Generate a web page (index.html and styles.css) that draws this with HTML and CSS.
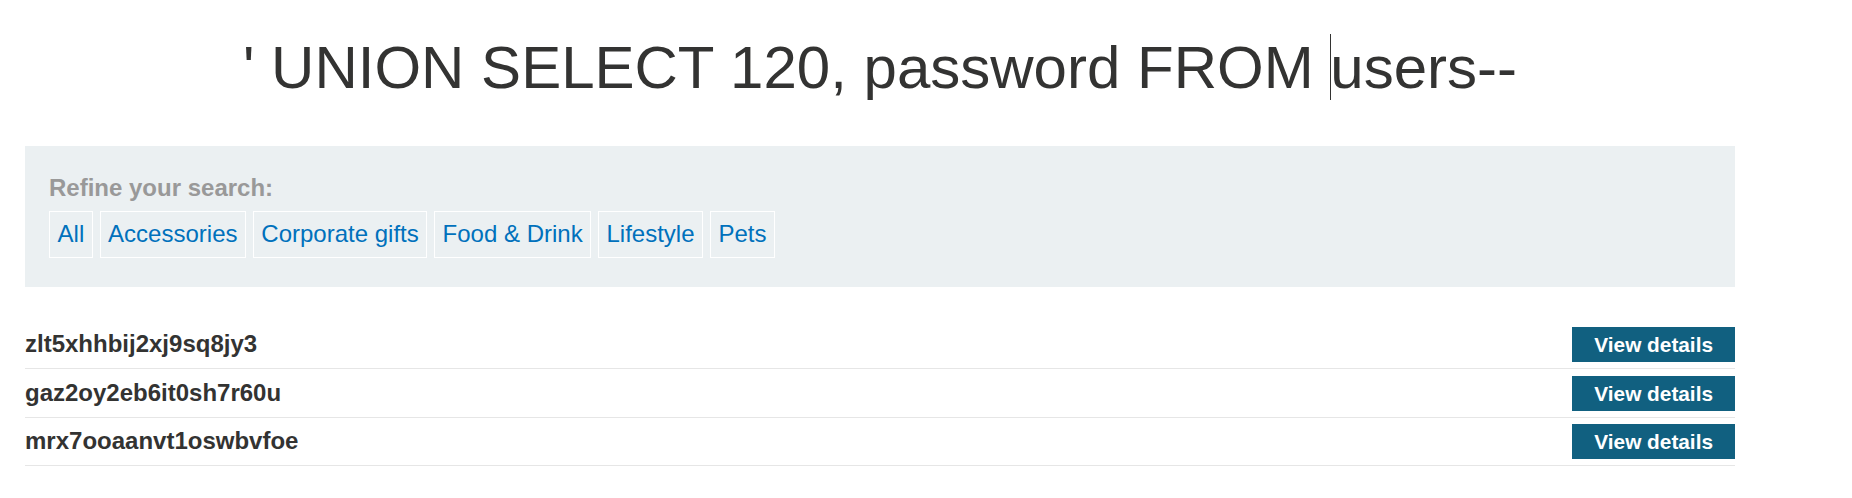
FILE: index.html
```html
<!DOCTYPE html>
<html lang="en">
<head>
<meta charset="utf-8">
<title>Search results</title>
<link rel="stylesheet" href="styles.css">
</head>
<body>
<div class="page">
  <h1 class="title">' UNION SELECT 120, password FROM <span class="caret"></span>users--</h1>
  <section class="filters">
    <div class="filters-label">Refine your search:</div>
    <nav class="filters-links">
      <a class="filter-link" href="#">All</a>
      <a class="filter-link" href="#">Accessories</a>
      <a class="filter-link" href="#">Corporate gifts</a>
      <a class="filter-link" href="#">Food &amp; Drink</a>
      <a class="filter-link" href="#">Lifestyle</a>
      <a class="filter-link" href="#">Pets</a>
    </nav>
  </section>
  <div class="products">
    <div class="product-row">
      <span class="product-name">zlt5xhhbij2xj9sq8jy3</span>
      <a class="btn" href="#">View details</a>
    </div>
    <div class="product-row">
      <span class="product-name">gaz2oy2eb6it0sh7r60u</span>
      <a class="btn" href="#">View details</a>
    </div>
    <div class="product-row">
      <span class="product-name">mrx7ooaanvt1oswbvfoe</span>
      <a class="btn" href="#">View details</a>
    </div>
  </div>
</div>
</body>
</html>
```

FILE: styles.css
```css
html, body {
  margin: 0;
  padding: 0;
  background: #ffffff;
}

body {
  font-family: "Liberation Sans", Arial, sans-serif;
  color: #333332;
}

.page {
  width: 1710px;
  margin-left: 25px;
  padding-top: 33.5px;
}

.title {
  margin: 0 0 45px;
  font-size: 60px;
  font-weight: normal;
  line-height: 67px;
  text-align: center;
  color: #333332;
}

.caret {
  display: inline-block;
  width: 1px;
  height: 66px;
  margin-right: -1px;
  background: #333332;
  vertical-align: top;
}

.filters {
  background: #ebf0f2;
  padding: 28.7px 24px 28.7px 24px;
}

.filters-label {
  font-size: 24px;
  font-weight: bold;
  line-height: 28.8px;
  color: #999999;
  margin-bottom: 8.5px;
}

.filters-links {
  display: flex;
  gap: 6.67px;
}

.filter-link {
  display: block;
  padding: 8px 7.6px;
  border: 1px solid #ffffff;
  color: #0071bc;
  font-size: 24px;
  line-height: 28.8px;
  text-decoration: none;
}

.products {
  margin-top: 33.3px;
}

.product-row {
  display: flex;
  justify-content: space-between;
  align-items: center;
  padding: 6.7px 0 6px;
  border-bottom: 1px solid #e6e6e6;
}

.product-name {
  font-size: 24px;
  font-weight: bold;
  line-height: 28.8px;
  color: #333332;
}

.btn {
  display: block;
  padding: 5px 22px;
  background: #116080;
  color: #ffffff;
  font-size: 20.8px;
  font-weight: bold;
  line-height: 25px;
  text-decoration: none;
}
```
